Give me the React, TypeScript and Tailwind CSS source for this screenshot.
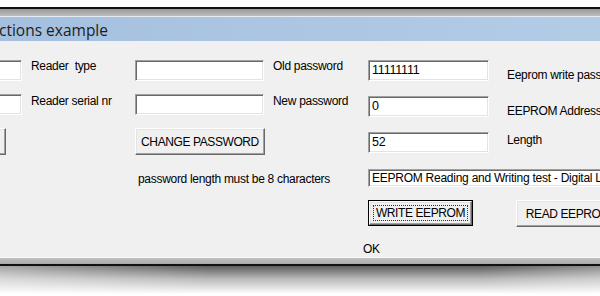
import React from 'react';

const sunken =
  'bg-white border border-t-[#a0a0a0] border-l-[#a0a0a0] border-b-white border-r-white shadow-[inset_1px_1px_0_#696969,inset_-1px_-1px_0_#e3e3e3]';
const raised =
  'bg-[#f0f0f0] border border-t-white border-l-white border-b-[#696969] border-r-[#696969] shadow-[inset_-1px_-1px_0_#a0a0a0,inset_1px_1px_0_#e3e3e3]';

function Field({ value, className }: { value?: string; className: string }) {
  return (
    <div className={`${sunken} ${className} flex items-center pl-[3px] overflow-hidden whitespace-nowrap`}>
      {value}
    </div>
  );
}

function Button({ label, className }: { label?: string; className: string }) {
  return (
    <div className={`${raised} ${className} flex items-center justify-center whitespace-nowrap`}>
      {label}
    </div>
  );
}

export default function App() {
  return (
    <div className="w-[600px] h-[296px] bg-white overflow-hidden font-['Liberation_Sans',Arial,sans-serif] text-[12px] text-black">
      <div className="h-[7px] bg-white" />
      <div className="h-[2px] bg-[#111]" />
      {/* window frame top */}
      <div className="h-[7px] bg-gradient-to-b from-[#9a9a9a] to-[#bcbcbc]" />
      <div className="h-px bg-[#e4ebf3]" />
      <div className="h-[24px] bg-gradient-to-r from-[#a5c0df] to-[#b3cce6] flex items-center">
        <span className="-ml-px font-['Open_Sans',sans-serif] text-[15.5px] text-[#1d1d1d] leading-none pt-[3px]">
          ctions example
        </span>
      </div>

      {/* dialog body */}
      <div className="h-[216px] bg-[#f0f0f0] overflow-hidden flex pt-[19px] tracking-[-0.3px]">
        <div className="-ml-[40px] w-[62px] flex flex-col shrink-0">
          <Field className="w-[62px] h-[21px]" />
          <Field className="w-[62px] h-[21px] mt-[13px]" />
          <Button className="w-[46px] h-[27px] mt-[13px]" />
        </div>

        <div className="ml-[9px] w-[104px] shrink-0 flex flex-col leading-[15px]">
          <div className="-mt-px">Reader&nbsp; type</div>
          <div className="mt-[20px]">Reader serial nr</div>
        </div>

        <div className="w-[138px] shrink-0 flex flex-col">
          <Field className="w-[129px] h-[21px]" />
          <Field className="w-[129px] h-[21px] mt-[13px]" />
          <Button label="CHANGE PASSWORD" className="w-[130px] h-[27px] mt-[13px] tracking-[-0.4px]" />
          <div className="ml-[3px] mt-[17px] leading-[15px] whitespace-nowrap">
            password length must be 8 characters
          </div>
        </div>

        <div className="w-[95px] shrink-0 flex flex-col leading-[15px]">
          <div className="-mt-px">Old password</div>
          <div className="mt-[20px]">New password</div>
        </div>

        <div className="flex flex-col shrink-0">
          <div className="flex">
            <Field value="11111111" className="w-[121px] h-[21px] text-[12.5px] tracking-[-0.2px]" />
            <div className="ml-[18px] mt-[8px] leading-[15px] whitespace-nowrap">Eeprom write password</div>
          </div>
          <div className="flex mt-[13px]">
            <Field value="0" className="w-[121px] h-[21px] text-[12.5px]" />
            <div className="ml-[18px] mt-[8px] leading-[15px] whitespace-nowrap">EEPROM Address</div>
          </div>
          <div className="flex mt-[13px]">
            <Field value="52" className="w-[121px] h-[21px] text-[12.5px]" />
            <div className="ml-[18px] mt-px leading-[15px]">Length</div>
          </div>
          <Field
            value="EEPROM Reading and Writing test - Digital Logic"
            className="w-[300px] h-[20px] mt-[16px] tracking-[-0.25px]"
          />
          <div className="flex mt-[13px] items-start">
            <div className="w-[105px] h-[26px] border border-black">
              <div className={`${raised} w-full h-full p-[3px]`}>
                <div className="w-full h-full border border-dotted border-[#333] flex items-center justify-center whitespace-nowrap tracking-[-0.4px]">
                  WRITE EEPROM
                </div>
              </div>
            </div>
            <Button label="READ EEPROM" className="ml-[43px] w-[104px] h-[27px] tracking-[-0.4px]" />
          </div>
          <div className="-ml-[5px] mt-[15px] leading-[15px]">OK</div>
        </div>
      </div>

      {/* window frame bottom */}
      <div className="h-px bg-[#fafafa]" />
      <div className="h-[6px] bg-gradient-to-b from-[#c2c2c2] to-[#a9a9a9]" />
      <div className="h-[2px] bg-[#111]" />
      <div className="h-[28px] bg-[linear-gradient(to_right,rgba(255,255,255,0.45),rgba(255,255,255,0)_35%,rgba(255,255,255,0)_80%,rgba(255,255,255,0.3)),linear-gradient(to_bottom,#5c5c5c,#b8b8b8_45%,#ffffff)]" />
    </div>
  );
}
